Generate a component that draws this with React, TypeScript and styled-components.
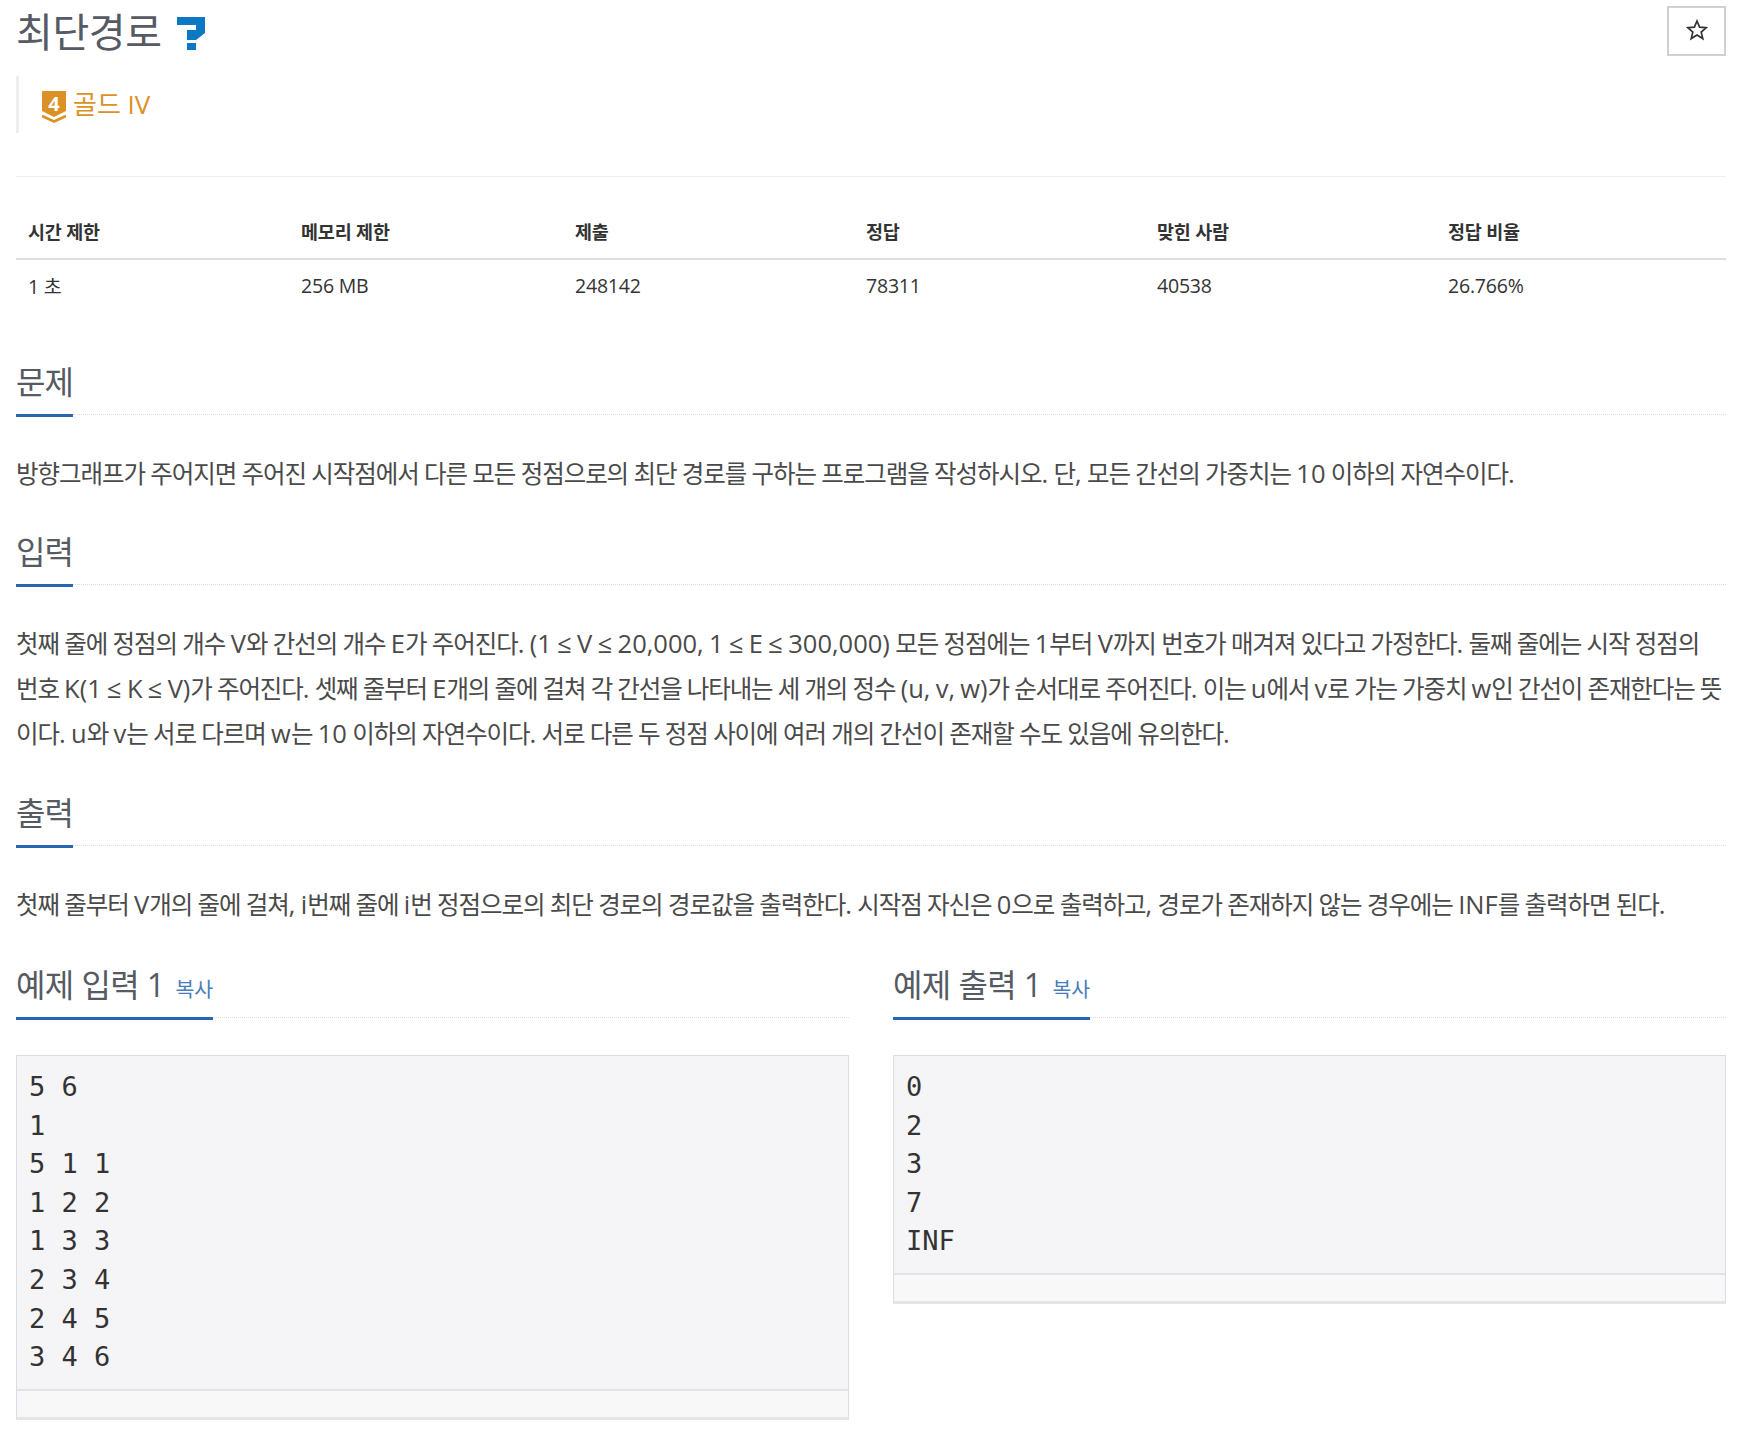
import React from "react";
import styled, { createGlobalStyle } from "styled-components";

const FONT = `"Open Sans", "Inter", "Noto Sans CJK KR", sans-serif`;

const Global = createGlobalStyle`
  html, body { margin: 0; padding: 0; background: #fff; }
  body { font-family: ${FONT}; color: #333; font-size: 14px; }
  * { box-sizing: border-box; }
`;
const Page = styled.div`
  width: 1740px; height: 1438px; padding: 0 14px 0 16px; overflow: hidden;
`;
const Header = styled.div`
  display: flex; justify-content: space-between; align-items: flex-start; height: 56px;
`;
const Title = styled.h1`
  margin: 8px 0 0; height: 48px; font-size: 40px; font-weight: 400; line-height: 48px; color: #555a63; display: flex; align-items: center; gap: 15px; letter-spacing: -0.4px;
`;
const QuestionIcon = styled.svg`
  margin-top: 3px;
`;
const StarButton = styled.button`
  width: 59px; height: 50px; margin-top: 6px; border: 2px solid #d0d0d0; background: #fff; padding: 0 0 2px; display: flex; align-items: center; justify-content: center;
`;
const Tier = styled.div`
  margin-top: 20px; height: 57px; border-left: 3px solid #eee; padding-left: 23px; display: flex; align-items: flex-start; gap: 7px; color: #dc9127; font-size: 26px; line-height: 56px;
`;
const TierBadge = styled.svg`
  margin-top: 11px; flex: none;
`;
const Divider = styled.hr`
  margin: 43px 0 0; border: 0; border-top: 1px solid #eee;
`;
const Table = styled.table`
  width: 100%; border-collapse: collapse; margin-top: 27px; table-layout: fixed;
`;
const Th = styled.th<{ $w: number }>`
  width: ${p => p.$w}px; text-align: left; font-weight: 700; height: 55px; padding: 0 12px; border-bottom: 2px solid #ddd; font-size: 18.5px; letter-spacing: -0.2px;
`;
const Td = styled.td`
  height: 51px; padding: 0 12px; font-size: 19.5px; letter-spacing: -0.2px;
`;
const Section = styled.section<{ $top: number }>`
  margin-top: ${p => p.$top}px;
`;
const Headline = styled.div`
  border-bottom: 1px dotted #ddd; height: 60px;
`;
const HeadText = styled.div<{ $spacing?: number }>`
  display: inline-flex; align-items: baseline; gap: 11px; height: 62px; border-bottom: 3px solid #2a65b0; font-size: 32px; line-height: 53px; color: #555a63; letter-spacing: ${p => p.$spacing ?? -1}px; white-space: pre;
`;
const Copy = styled.span`
  font-size: 20.500px; color: #4a7ebb; letter-spacing: 0;
`;
const Body = styled.div`
  margin: 36px 0 0; font-size: 24.5px; line-height: 45px; color: #4a4a4a; letter-spacing: -1.05px;
`;
const Line = styled.div<{ $tight?: boolean }>`
  white-space: nowrap; ${p => (p.$tight ? "letter-spacing: -1.12px;" : "")}
`;
const Latin = styled.span`
  font-size: 25.5px; letter-spacing: 0;
`;
const Samples = styled.div`
  display: grid; grid-template-columns: 1fr 1fr; gap: 44px; margin-top: 31px; align-items: start;
`;
const Pre = styled.pre`
  margin: 37px 0 0; background: #f5f5f7; border: 1px solid #dcdce4; border-bottom: 3px solid #e5e5e5; font-family: "DejaVu Sans Mono", monospace; font-size: 27px; line-height: 38.6px; color: #333;
`;
const Code = styled.div`
  padding: 12px 12px 12px;
`;
const Foot = styled.div`
  height: 28px; border-top: 2px solid #e3e3e3; background: #f8f8f8;
`;

const Cols = [273, 274, 291, 291, 291, 290];
const Heads = ["시간 제한", "메모리 제한", "제출", "정답", "맞힌 사람", "정답 비율"];
const Vals = ["1 초", "256 MB", "248142", "78311", "40538", "26.766%"];

function Mixed({ text, tight }: { text: string; tight?: boolean }) {
  const parts = text.split(/([A-Za-z0-9(),.≤]+)/);
  return <Line $tight={tight}>{parts.map((p, i) => (i % 2 ? <Latin key={i}>{p}</Latin> : p))}</Line>;
}

export default function App() {
  return (
    <Page>
      <Global />
      <Header>
        <Title>최단경로
          <QuestionIcon width="28" height="33" viewBox="0 0 28 33">
            <path d="M0 0H28V16L19 23H10V13H19V8H0Z" fill="#0a78c2" />
            <rect x="10" y="26" width="9" height="7" fill="#0a78c2" />
          </QuestionIcon>
        </Title>
        <StarButton aria-label="star">
          <svg width="22" height="22" viewBox="0 0 22 22"><path d="M11 2l2.600 6.200 6.700.5-5.100 4.400 1.600 6.500L11 16.100l-5.800 3.500 1.600-6.500-5.100-4.400 6.700-.5z" fill="none" stroke="#333" strokeWidth="1.700" /></svg>
        </StarButton>
      </Header>
      <Tier>
        <TierBadge width="24" height="36" viewBox="0 -4 24 36">
          <path d="M0 0h24v20l-12 6-12-6z" fill="#dc9127" />
          <path d="M0 25l12 5.500 12-5.500" stroke="#dc9127" strokeWidth="2.500" fill="none" />
          <text x="12" y="19.500" textAnchor="middle" fontSize="20" fontWeight="700" fill="#fff" fontFamily="Open Sans">4</text>
        </TierBadge>
        <span>골드 IV</span>
      </Tier>
      <Divider />
      <Table>
        <thead><tr>{Heads.map((h, i) => <Th key={h} $w={Cols[i]}>{h}</Th>)}</tr></thead>
        <tbody><tr>{Vals.map(v => <Td key={v}>{v}</Td>)}</tr></tbody>
      </Table>
      <Section $top={45}>
        <Headline><HeadText>문제</HeadText></Headline>
        <Body><Mixed text="방향그래프가 주어지면 주어진 시작점에서 다른 모든 정점으로의 최단 경로를 구하는 프로그램을 작성하시오. 단, 모든 간선의 가중치는 10 이하의 자연수이다." /></Body>
      </Section>
      <Section $top={29}>
        <Headline><HeadText>입력</HeadText></Headline>
        <Body>
          <Mixed text="첫째 줄에 정점의 개수 V와 간선의 개수 E가 주어진다. (1 ≤ V ≤ 20,000, 1 ≤ E ≤ 300,000) 모든 정점에는 1부터 V까지 번호가 매겨져 있다고 가정한다. 둘째 줄에는 시작 정점의" />
          <Mixed tight text="번호 K(1 ≤ K ≤ V)가 주어진다. 셋째 줄부터 E개의 줄에 걸쳐 각 간선을 나타내는 세 개의 정수 (u, v, w)가 순서대로 주어진다. 이는 u에서 v로 가는 가중치 w인 간선이 존재한다는 뜻" />
          <Mixed text="이다. u와 v는 서로 다르며 w는 10 이하의 자연수이다. 서로 다른 두 정점 사이에 여러 개의 간선이 존재할 수도 있음에 유의한다." />
        </Body>
      </Section>
      <Section $top={30}>
        <Headline><HeadText>출력</HeadText></Headline>
        <Body><Mixed text="첫째 줄부터 V개의 줄에 걸쳐, i번째 줄에 i번 정점으로의 최단 경로의 경로값을 출력한다. 시작점 자신은 0으로 출력하고, 경로가 존재하지 않는 경우에는 INF를 출력하면 된다." /></Body>
      </Section>
      <Samples>
        <div>
          <Headline><HeadText $spacing={-0.6}>예제 입력 1<Copy>복사</Copy></HeadText></Headline>
          <Pre><Code>{"5 6\n1\n5 1 1\n1 2 2\n1 3 3\n2 3 4\n2 4 5\n3 4 6"}</Code><Foot /></Pre>
        </div>
        <div>
          <Headline><HeadText $spacing={-0.6}>예제 출력 1<Copy>복사</Copy></HeadText></Headline>
          <Pre><Code>{"0\n2\n3\n7\nINF"}</Code><Foot /></Pre>
        </div>
      </Samples>
    </Page>
  );
}
